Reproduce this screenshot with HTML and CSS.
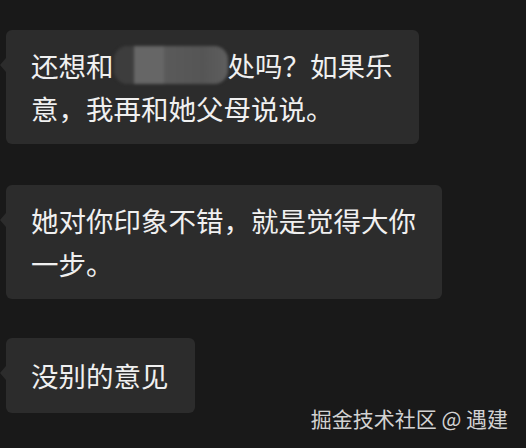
FILE: index.html
```html
<!DOCTYPE html>
<html lang="zh-CN">
<head>
<meta charset="utf-8">
<link rel="stylesheet" href="styles.css">
</head>
<body>
<div class="chat">
  <div class="bubble">还想和<span class="blur"><span class="b1"></span><span class="b2"></span><span class="b3"></span></span>处吗？如果乐<br>意，我再和她父母说说。</div>
  <div class="bubble">她对你印象不错，就是觉得大你<br>一步。</div>
  <div class="bubble single">没别的意见</div>
</div>
<div class="watermark">掘金技术社区 @ 遇建</div>
</body>
</html>
```
FILE: styles.css
```css
html, body {
  margin: 0;
  padding: 0;
  background: #191919;
  width: 526px;
  height: 448px;
  overflow: hidden;
}
body {
  position: relative;
  font-family: "Noto Sans CJK SC", "Noto Sans", sans-serif;
}
.chat {
  display: flex;
  flex-direction: column;
  align-items: flex-start;
  gap: 41px;
  padding: 30px 0 0 6px;
}
.bubble {
  position: relative;
  background: #2c2c2c;
  color: #f0f0f0;
  font-size: 27.5px;
  line-height: 43px;
  padding: 14px 26px 14px 25px;
  border-radius: 6px;
  white-space: nowrap;
}
.bubble.single {
  margin-top: -2px;
  padding-top: 16px;
  padding-bottom: 16px;
}
.bubble::before {
  content: "";
  position: absolute;
  left: -6px;
  top: 28px;
  border-top: 7px solid transparent;
  border-bottom: 7px solid transparent;
  border-right: 6px solid #2c2c2c;
}
.blur {
  display: inline-flex;
  width: 114px;
  height: 38px;
  vertical-align: -7px;
  border-radius: 14px;
  overflow: hidden;
  filter: blur(1.5px);
  background: #3a3a3a;
}
.b1 { width: 20px; background: #3d3d3d; }
.b2 { width: 30px; background: #666; }
.b3 { flex: 1; background: linear-gradient(90deg, #5a5a5a, #555 60%, #5e5e5e); }
.watermark {
  position: absolute;
  right: 18px;
  top: 404px;
  font-size: 21px;
  color: #d2d2d2;
  line-height: 28px;
  white-space: nowrap;
}
```
